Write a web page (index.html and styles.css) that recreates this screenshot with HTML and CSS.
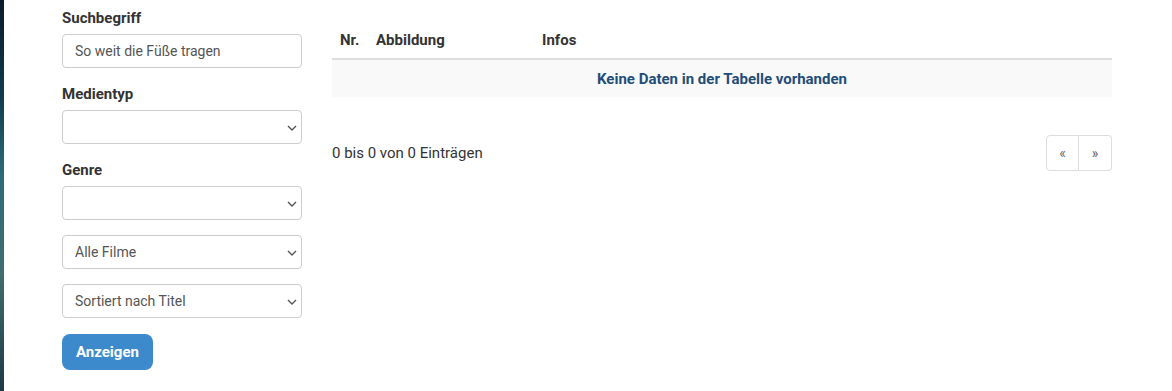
FILE: index.html
```html
<!DOCTYPE html>
<html lang="de">
<head>
  <meta charset="UTF-8">
  <meta name="viewport" content="width=device-width, initial-scale=1.0">
  <title>Filmsuche</title>
  <link rel="stylesheet" href="styles.css">
</head>
<body>
  <div class="edge"></div>
  <div class="page">
    <form class="sidebar">
      <div class="form-group">
        <label for="q">Suchbegriff</label>
        <input type="text" id="q" class="control" value="So weit die Füße tragen">
      </div>
      <div class="form-group">
        <label for="medium">Medientyp</label>
        <div class="select-wrap">
          <select id="medium" class="control"><option></option></select>
          <svg class="chevron" width="10" height="6" viewBox="0 0 10 6"><path d="M1 1 L5 5 L9 1" fill="none" stroke="#555" stroke-width="1.4"/></svg>
        </div>
      </div>
      <div class="form-group">
        <label for="genre">Genre</label>
        <div class="select-wrap">
          <select id="genre" class="control"><option></option></select>
          <svg class="chevron" width="10" height="6" viewBox="0 0 10 6"><path d="M1 1 L5 5 L9 1" fill="none" stroke="#555" stroke-width="1.4"/></svg>
        </div>
      </div>
      <div class="form-group">
        <div class="select-wrap">
          <select class="control"><option>Alle Filme</option></select>
          <svg class="chevron" width="10" height="6" viewBox="0 0 10 6"><path d="M1 1 L5 5 L9 1" fill="none" stroke="#555" stroke-width="1.4"/></svg>
        </div>
      </div>
      <div class="form-group">
        <div class="select-wrap">
          <select class="control"><option>Sortiert nach Titel</option></select>
          <svg class="chevron" width="10" height="6" viewBox="0 0 10 6"><path d="M1 1 L5 5 L9 1" fill="none" stroke="#555" stroke-width="1.4"/></svg>
        </div>
      </div>
      <button type="submit" class="btn">Anzeigen</button>
    </form>

    <div class="results">
      <table class="grid">
        <thead>
          <tr>
            <th class="col-nr">Nr.</th>
            <th class="col-img">Abbildung</th>
            <th>Infos</th>
          </tr>
        </thead>
        <tbody>
          <tr>
            <td colspan="3" class="empty">Keine Daten in der Tabelle vorhanden</td>
          </tr>
        </tbody>
      </table>

      <div class="footer">
        <div class="info">0 bis 0 von 0 Einträgen</div>
        <ul class="pager">
          <li><a href="#">«</a></li>
          <li><a href="#">»</a></li>
        </ul>
      </div>
    </div>
  </div>
</body>
</html>
```

FILE: styles.css
```css
body {
  margin: 0;
  font-family: Roboto, "Liberation Sans", Arial, sans-serif;
  font-size: 15px;
  line-height: 20px;
  color: #333;
  background: #fff;
  display: flex;
  min-height: 391px;
}

.edge {
  width: 4px;
  flex-shrink: 0;
  background: linear-gradient(to bottom, #0a1a2c 0%, #0f3d4e 25%, #2d6c78 45%, #3f6d70 70%, #1f3a44 100%);
}

.page {
  display: flex;
  gap: 30px;
  padding: 7px 0 0 58px;
}

.sidebar {
  width: 240px;
}

.form-group {
  margin-bottom: 15px;
}

label {
  display: block;
  font-weight: bold;
  line-height: 22px;
  margin-bottom: 5px;
}

.control {
  display: block;
  width: 100%;
  height: 34px;
  box-sizing: border-box;
  padding: 6px 12px;
  font-family: inherit;
  font-size: 14px;
  color: #555;
  background: #fff;
  border: 1px solid #ccc;
  border-radius: 4px;
  appearance: none;
  -webkit-appearance: none;
  outline: none;
}

.select-wrap {
  position: relative;
}

.chevron {
  position: absolute;
  right: 5px;
  top: 15px;
}

.btn {
  height: 36px;
  margin-top: 1px;
  padding: 0 14px;
  font-family: inherit;
  font-size: 15px;
  font-weight: bold;
  color: #fff;
  background: #3c8acb;
  border: none;
  border-radius: 8px;
  cursor: pointer;
}

.results {
  width: 780px;
  padding-top: 15px;
}

.grid {
  width: 100%;
  border-collapse: collapse;
}

.grid th {
  text-align: left;
  padding: 8px;
  border-bottom: 2px solid #ddd;
}

.col-nr {
  width: 20px;
}

.col-img {
  width: 150px;
}

.grid td {
  padding: 9px 8px 8px;
}

.empty {
  text-align: center;
  font-weight: bold;
  color: #1f4e79;
  background: #f9f9f9;
}

.footer {
  display: flex;
  justify-content: space-between;
  align-items: center;
  margin-top: 38px;
}

.pager {
  display: flex;
  list-style: none;
  margin: 0;
  padding: 0;
}

.pager a {
  display: block;
  width: 33px;
  height: 36px;
  box-sizing: border-box;
  line-height: 34px;
  text-align: center;
  font-size: 14px;
  color: #666;
  text-decoration: none;
  border: 1px solid #ddd;
}

.pager li:first-child a {
  border-radius: 4px 0 0 4px;
}

.pager li:last-child a {
  border-left: none;
  border-radius: 0 4px 4px 0;
}
```
